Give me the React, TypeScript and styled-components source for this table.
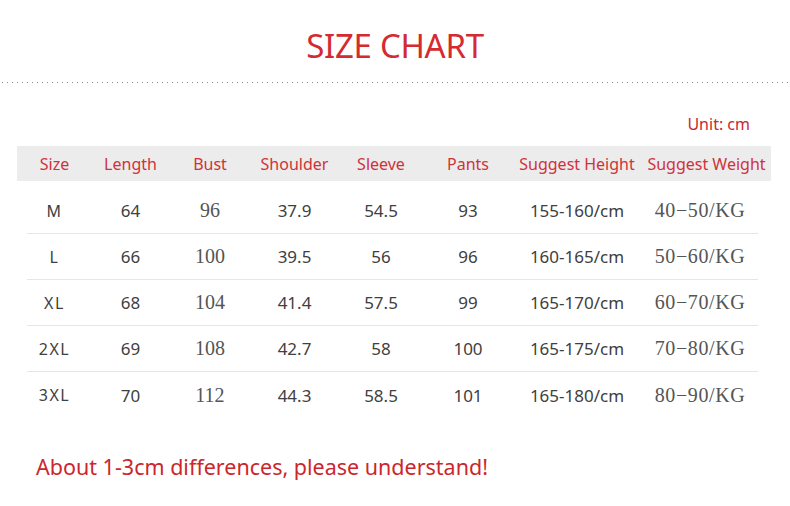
import React from "react";
import styled, { createGlobalStyle } from "styled-components";

const GlobalStyle = createGlobalStyle`
  html, body {
    margin: 0;
    padding: 0;
    background: #ffffff;
  }
  body {
    font-family: "Noto Sans", "Open Sans", sans-serif;
  }
`;

type Row = {
  size: string;
  length: string;
  bust: string;
  shoulder: string;
  sleeve: string;
  pants: string;
  height: string;
  weight: string;
};

const rows: Row[] = [
  { size: "M", length: "64", bust: "96", shoulder: "37.9", sleeve: "54.5", pants: "93", height: "155-160/cm", weight: "40−50/KG" },
  { size: "L", length: "66", bust: "100", shoulder: "39.5", sleeve: "56", pants: "96", height: "160-165/cm", weight: "50−60/KG" },
  { size: "XL", length: "68", bust: "104", shoulder: "41.4", sleeve: "57.5", pants: "99", height: "165-170/cm", weight: "60−70/KG" },
  { size: "2XL", length: "69", bust: "108", shoulder: "42.7", sleeve: "58", pants: "100", height: "165-175/cm", weight: "70−80/KG" },
  { size: "3XL", length: "70", bust: "112", shoulder: "44.3", sleeve: "58.5", pants: "101", height: "165-180/cm", weight: "80−90/KG" },
];

const headings = [
  "Size",
  "Length",
  "Bust",
  "Shoulder",
  "Sleeve",
  "Pants",
  "Suggest Height",
  "Suggest Weight",
];

export default function App() {
  return (
    <>
      <GlobalStyle />
      <Page>
        <Title>SIZE CHART</Title>
        <DottedRule />
        <Unit>Unit: cm</Unit>
        <HeaderBand>
          {headings.map((h) => (
            <HeadCell key={h}>{h}</HeadCell>
          ))}
        </HeaderBand>
        <Body>
          {rows.map((r, i) => (
            <BodyRow key={r.size} $last={i === rows.length - 1}>
              <Cell $size>{r.size}</Cell>
              <Cell>{r.length}</Cell>
              <Cell $serif>{r.bust}</Cell>
              <Cell>{r.shoulder}</Cell>
              <Cell>{r.sleeve}</Cell>
              <Cell>{r.pants}</Cell>
              <Cell>{r.height}</Cell>
              <Cell $serif $wide>
                {r.weight}
              </Cell>
            </BodyRow>
          ))}
        </Body>
        <Note>About 1-3cm differences, please understand!</Note>
      </Page>
    </>
  );
}

const Page = styled.div`
  width: 790px;
  height: 506px;
  display: flex;
  flex-direction: column;
  overflow: hidden;
`;

const Title = styled.h1`
  margin: 0;
  padding-top: 24px;
  height: 58px;
  box-sizing: border-box;
  text-align: center;
  font-size: 33px;
  font-weight: 400;
  line-height: 44px;
  color: #d42a30;
  letter-spacing: -0.3px;
`;

const DottedRule = styled.div`
  margin-top: 24px;
  height: 1px;
  background-image: linear-gradient(to right, #8a8a8a 1px, transparent 1px);
  background-size: 5px 1px;
  background-position: 2px 0;
`;

const Unit = styled.div`
  align-self: flex-end;
  margin: 28px 40px 0 0;
  height: 35px;
  line-height: 26px;
  font-size: 16px;
  color: #c8282e;
`;

const HeaderBand = styled.div`
  margin-left: 17px;
  width: 754px;
  height: 35px;
  background: #ececec;
  display: grid;
  grid-template-columns: 75px 77px 82px 87px 86px 88px 130px 129px;
  align-items: center;
`;

const HeadCell = styled.div`
  text-align: center;
  font-size: 16px;
  color: #d0323a;
  white-space: nowrap;
`;

const Body = styled.div`
  margin-top: 7px;
  margin-left: 27px;
  width: 731px;
  display: flex;
  flex-direction: column;
`;

const BodyRow = styled.div<{ $last?: boolean }>`
  display: grid;
  grid-template-columns: 65px 77px 82px 87px 86px 88px 130px 116px;
  align-items: center;
  height: 46px;
  box-sizing: border-box;
  border-bottom: ${(p) => (p.$last ? "none" : "1px solid #e6e6e6")};
`;

const Cell = styled.div<{ $serif?: boolean; $size?: boolean; $wide?: boolean }>`
  text-align: center;
  white-space: nowrap;
  font-family: ${(p) =>
    p.$serif ? `"Liberation Serif", "DejaVu Serif", serif` : `"Noto Sans", "Open Sans", sans-serif`};
  font-size: ${(p) => (p.$serif ? "20px" : p.$size ? "16px" : "17px")};
  color: ${(p) => (p.$serif ? "#555555" : "#404040")};
  letter-spacing: ${(p) => (p.$wide ? "0.6px" : p.$size ? "1.5px" : "0")};
  padding-right: ${(p) => (p.$size ? "10px" : "0")};
`;

const Note = styled.div`
  margin: 34px 0 0 36px;
  font-size: 21.5px;
  color: #cc262c;
`;
